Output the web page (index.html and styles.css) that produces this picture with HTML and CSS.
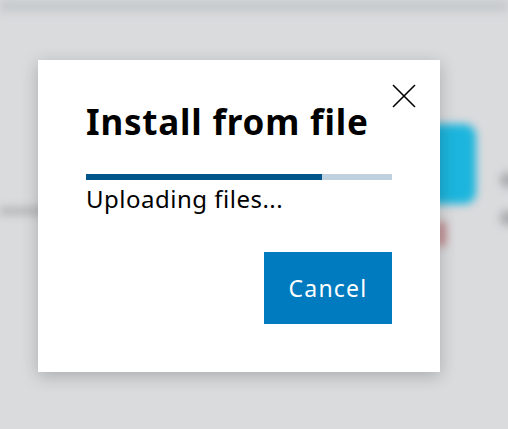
FILE: index.html
```html
<!DOCTYPE html>
<html lang="en">
<head>
  <meta charset="UTF-8">
  <title>Install from file</title>
  <link rel="stylesheet" href="styles.css">
</head>
<body>
  <div class="backdrop">
    <div class="topbar"></div>
    <div class="page">
      <div class="divider"></div>
      <div class="tile"></div>
      <div class="badge"></div>
      <div class="dot dot-a"></div>
      <div class="dot dot-b"></div>
    </div>
  </div>

  <div class="overlay">
    <div class="dialog">
      <button type="button" class="close-btn" aria-label="Close">
        <svg width="24" height="24" viewBox="0 0 24 24">
          <path d="M1 1 L23 23 M23 1 L1 23" stroke="#000" stroke-width="1.6" fill="none"/>
        </svg>
      </button>
      <h1 class="title">Install from file</h1>
      <div class="progress">
        <div class="progress-bar" style="width: 77%"></div>
      </div>
      <div class="status">Uploading files...</div>
      <div class="actions">
        <button type="button" class="cancel-btn">Cancel</button>
      </div>
    </div>
  </div>
</body>
</html>
```

FILE: styles.css
```css
body {
  margin: 0;
  width: 508px;
  height: 429px;
  overflow: hidden;
  font-family: "Noto Sans", sans-serif;
  background: #dadbdd;
  position: relative;
}
.backdrop {
  height: 100%;
  filter: blur(4px);
}
.topbar {
  height: 12px;
  background: #c6c9cc;
}
.page {
  position: relative;
  height: 417px;
}
.divider {
  position: absolute;
  left: 0;
  top: 195px;
  width: 60px;
  height: 8px;
  background: #b5b6b8;
}
.tile {
  position: absolute;
  left: 420px;
  top: 112px;
  width: 56px;
  height: 80px;
  border-radius: 12px;
  background: #1cb5dd;
}
.badge {
  position: absolute;
  left: 436px;
  top: 210px;
  width: 10px;
  height: 24px;
  background: #c28a8f;
}
.dot {
  position: absolute;
  width: 16px;
  height: 16px;
  border-radius: 50%;
  background: #a9abad;
}
.dot-a {
  left: 500px;
  top: 160px;
}
.dot-b {
  left: 500px;
  top: 198px;
}
.overlay {
  position: absolute;
  top: 0;
  left: 0;
  right: 0;
  bottom: 0;
}
.dialog {
  position: absolute;
  left: 38px;
  top: 60px;
  width: 402px;
  height: 312px;
  box-sizing: border-box;
  padding: 38px 48px 0 48px;
  background: white;
  box-shadow: 0 4px 16px rgba(0,0,0,0.22);
}
.close-btn {
  position: absolute;
  top: 24px;
  right: 24px;
  width: 24px;
  height: 24px;
  padding: 0;
  background: none;
  border: none;
  cursor: pointer;
}
.close-btn svg {
  display: block;
}
.title {
  margin: 0;
  font-size: 35px;
  font-weight: bold;
  letter-spacing: 0.8px;
  line-height: 48px;
  color: #000;
}
.progress {
  margin-top: 28px;
  height: 6px;
  background: #bfd0de;
}
.progress-bar {
  height: 100%;
  background: #00568a;
}
.status {
  margin-top: 3px;
  font-size: 24px;
  letter-spacing: 0.5px;
  line-height: 32px;
  color: #000;
}
.actions {
  display: flex;
  justify-content: flex-end;
  margin-top: 37px;
}
.cancel-btn {
  width: 128px;
  height: 72px;
  padding: 0;
  background: #007bc0;
  color: white;
  border: none;
  font-family: "Noto Sans", sans-serif;
  font-size: 23px;
  letter-spacing: 1.2px;
  cursor: pointer;
}
```
